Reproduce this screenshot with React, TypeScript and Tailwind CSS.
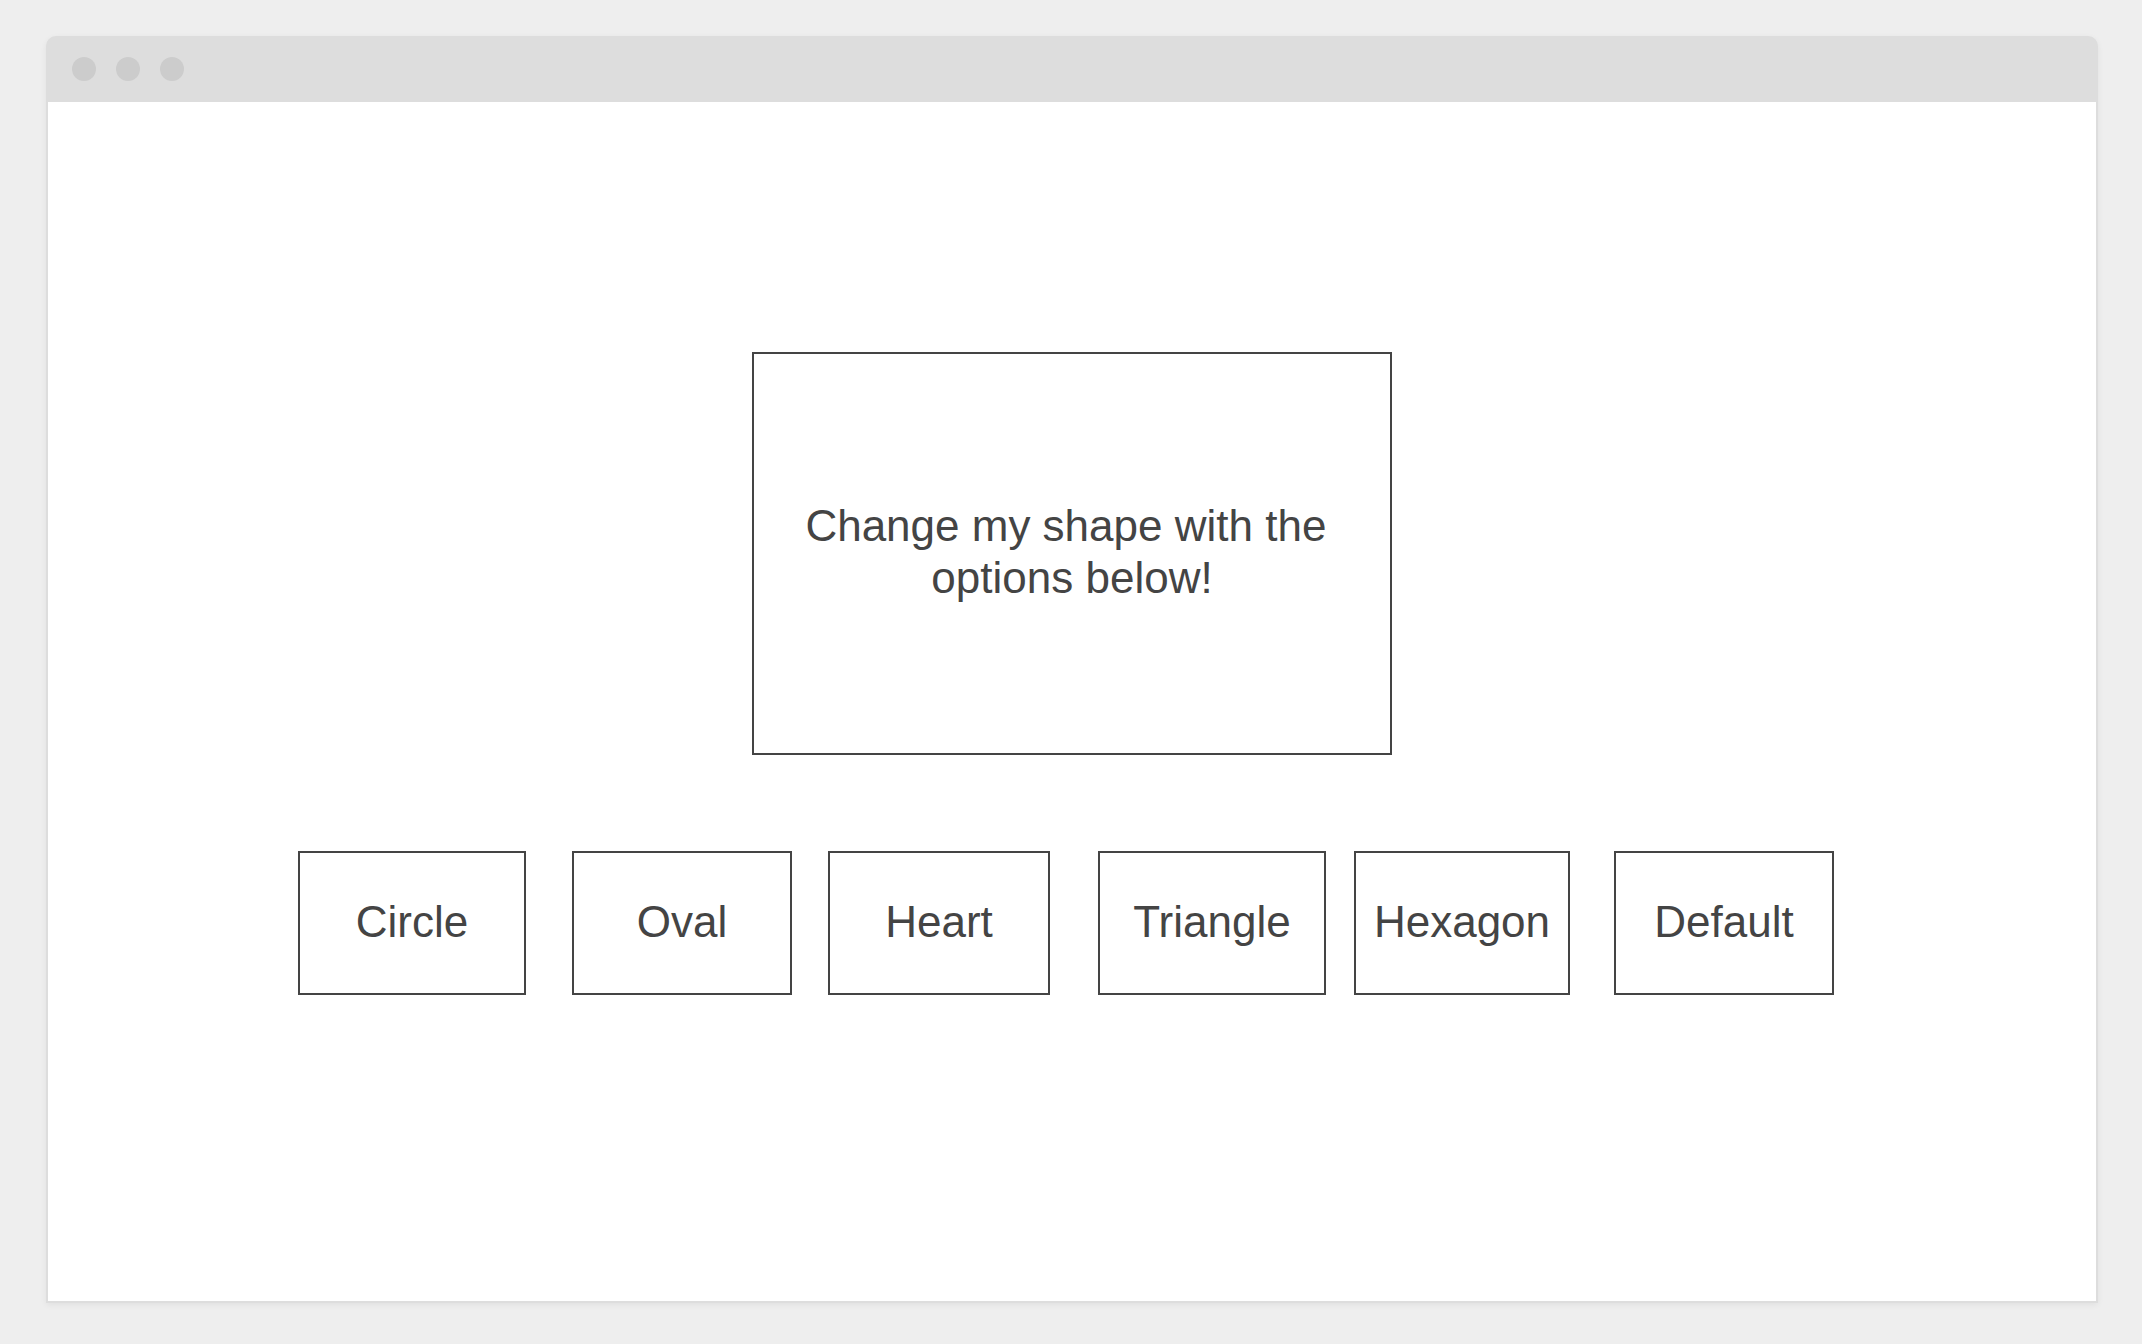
const shapes = [
  { label: "Circle", cls: "w-[228px] ml-[250px]" },
  { label: "Oval", cls: "w-[220px] ml-[46px]" },
  { label: "Heart", cls: "w-[222px] ml-[36px]" },
  { label: "Triangle", cls: "w-[228px] ml-[48px]" },
  { label: "Hexagon", cls: "w-[216px] ml-[28px]" },
  { label: "Default", cls: "w-[220px] ml-[44px]" },
];

export default function App() {
  return (
    <div className="min-h-[1344px] bg-[#eeeeee] pt-[36px] pl-[46px] font-['Liberation_Sans',Arial,sans-serif] text-[#444444]">
      {/* browser frame */}
      <div className="w-[2052px] rounded-t-[10px] bg-[#dddddd] pb-[2px] shadow-[0_2px_6px_rgba(0,0,0,0.06)]">
        <div className="flex h-[66px] items-center gap-[20px] pl-[26px]">
          <span className="h-[24px] w-[24px] rounded-full bg-[#cccccc]" />
          <span className="h-[24px] w-[24px] rounded-full bg-[#cccccc]" />
          <span className="h-[24px] w-[24px] rounded-full bg-[#cccccc]" />
        </div>

        <div className="mx-[2px] h-[1199px] bg-white pt-[250px]">
          <div className="flex justify-center">
            <div className="flex h-[403px] w-[640px] items-center justify-center border-2 border-[#444444] px-[40px] pb-[3px] text-center text-[44px] leading-[52px] whitespace-break-spaces">
              Change my shape with the options below!
            </div>
          </div>

          <div className="mt-[96px] flex">
            {shapes.map((s) => (
              <button
                key={s.label}
                className={`${s.cls} flex h-[144px] items-center justify-center border-2 border-[#444444] bg-white pb-[3px] text-[44px] leading-none text-[#444444]`}
              >
                {s.label}
              </button>
            ))}
          </div>
        </div>
      </div>
    </div>
  );
}
